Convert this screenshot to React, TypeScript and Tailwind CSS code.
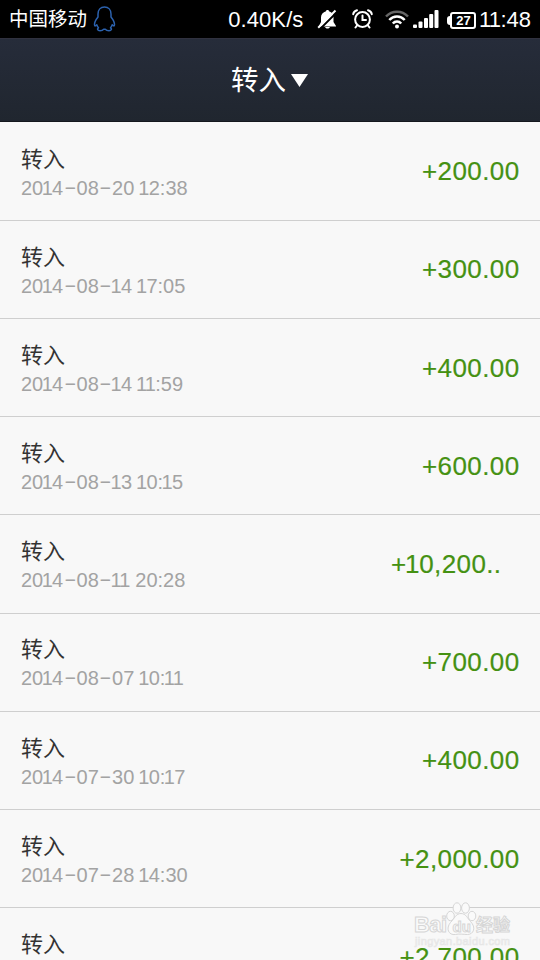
import React from 'react';

const records = [
  { date: '2014-08-20 12:38', amount: '+200.00' },
  { date: '2014-08-14 17:05', amount: '+300.00' },
  { date: '2014-08-14 11:59', amount: '+400.00' },
  { date: '2014-08-13 10:15', amount: '+600.00' },
  { date: '2014-08-11 20:28', amount: '+10,200..' },
  { date: '2014-08-07 10:11', amount: '+700.00' },
  { date: '2014-07-30 10:17', amount: '+400.00' },
  { date: '2014-07-28 14:30', amount: '+2,000.00' },
  { date: '2014-07-22 09:26', amount: '+2,700.00' },
];

// The digit 1 sits tighter than the others, hyphens are drawn wide
const Digits = ({ text }: { text: string }) => (
  <>
    {text.split(/([1-])/).map((part, index) => {
      if (part === '1') {
        return <span key={index} className="-ml-[1.6px] -mr-[0.7px]">1</span>;
      }
      if (part === '-') {
        return (
          <span key={index} className="inline-block w-[13.3px] text-center">
            <span className="inline-block -translate-y-px scale-x-[1.9]">-</span>
          </span>
        );
      }
      return part;
    })}
  </>
);

const PenguinIcon = () => (
  <svg className="ml-[5px] h-[28px] w-[25px]" viewBox="0 0 25 28" fill="none" stroke="#2c62ae" strokeWidth="1.5" strokeLinejoin="round">
    <path d="M12.5 2C8.500 2 6 4.800 6 9v3C4 14.500 2.500 17 2.500 19.500c0 1.800.6 2 2.300.2.3 1.300.9 2.300 1.700 3.100-1.700.9-1.200 2.900 1.500 2.900 1.900 0 3-.6 3.700-1.500h1.600c.7.900 1.800 1.500 3.700 1.500 2.700 0 3.200-2 1.500-2.900.8-.8 1.400-1.800 1.700-3.100 1.700 1.800 2.300 1.600 2.300-.2 0-2.500-1.500-5-3.500-7.500V9c0-4.200-2.500-7-6.500-7z" />
  </svg>
);

const MutedBellIcon = () => (
  <svg className="ml-[13px] h-[20px] w-[20px]" viewBox="0 0 20 20">
    <path fill="#fff" d="M10.500 1c1 0 1.300.5 1.500 1.200 3 .8 4.500 3.300 4.500 6V13l2.500 4v.5H2V17l2-4V8.200c0-2.700 2-5.200 5-6 .2-.7.5-1.200 1.500-1.200zM8 18h5c-.3.900-1.200 1.500-2.500 1.500S8.300 18.900 8 18z" />
    <path stroke="#000" strokeWidth="2" d="M2.500 20.500L20.500 2.500" />
    <path stroke="#fff" strokeWidth="2" d="M1.200 18.800L18.500 1.500" />
  </svg>
);

const AlarmIcon = () => (
  <svg className="ml-[15px] h-[20px] w-[21px]" viewBox="0 0 21 20" fill="none" stroke="#fff" strokeWidth="2" strokeLinecap="round">
    <circle cx="10.500" cy="10.500" r="7.400" />
    <path d="M10.500 6.500V11h3.500M1.200 5.200C1.500 3.200 3 1.700 5 1.200M19.800 5.200C19.500 3.200 18 1.700 16 1.200M5 16.500L3.500 18.500M16 16.500l1.500 2" />
  </svg>
);

const WifiIcon = () => (
  <svg className="ml-[12px] h-[19px] w-[24px]" viewBox="0 0 24 19" fill="none" strokeWidth="2.500">
    <path stroke="#666" d="M1 6.500C7 .2 17 .2 23 6.500" />
    <path stroke="#fff" d="M4.300 10C8.500 5.300 15.500 5.300 19.700 10M7.800 13.500c2.300-2.600 6.100-2.600 8.400 0" />
    <circle cx="12" cy="16.500" r="2" fill="#fff" />
  </svg>
);

const SignalIcon = () => (
  <svg className="ml-[4px] h-[18px] w-[26px]" viewBox="0 0 26 18" fill="#fff">
    <rect x="0" y="14.500" width="4" height="3.500" rx="1" />
    <rect x="5.500" y="11.500" width="4" height="6.500" rx="1" />
    <rect x="11" y="8" width="4" height="10" rx="1" />
    <rect x="16.200" y="4" width="4" height="14" rx="1" />
    <rect x="21.500" y="0" width="4" height="18" rx="1" />
  </svg>
);

const BatteryIcon = () => (
  <div className="mt-[2px] ml-[8px] flex items-center">
    <div className="h-[9px] w-[3px] rounded-l-sm bg-white" />
    <div className="flex h-[17px] w-[26px] items-center justify-center rounded-[3px] border-2 border-white pt-px text-[13px] leading-none font-bold">
      27
    </div>
  </div>
);

const StatusBar = () => (
  <div className="flex h-[38px] items-center bg-black pl-[9px] text-white">
    <span className="pt-px text-[19.5px]">中国移动</span>
    <PenguinIcon />
    <div className="ml-auto flex items-center pr-[9px]">
      <span className="mr-px text-[22px] tracking-[0.1px]">0.40K/s</span>
      <MutedBellIcon />
      <AlarmIcon />
      <WifiIcon />
      <SignalIcon />
      <BatteryIcon />
      <span className="ml-[4px] text-[22px] whitespace-nowrap"><Digits text="11:48" /></span>
    </div>
  </div>
);

const Watermark = () => (
  <div className="absolute top-[900px] left-[413px] h-[50px] w-[100px]">
    <svg className="h-[50px] w-[100px]" viewBox="0 0 100 50" fill="#fafafa" stroke="#d6d6d6" strokeWidth="1">
      <text x="1" y="32" fontSize="22" fontWeight="bold" textLength="33" fontFamily="Liberation Sans, sans-serif">Bai</text>
      <ellipse cx="37.500" cy="16" rx="3.800" ry="4.700" />
      <ellipse cx="44" cy="8" rx="3.900" ry="5.200" />
      <ellipse cx="52.500" cy="8" rx="3.900" ry="5.200" />
      <ellipse cx="59" cy="16" rx="3.800" ry="4.700" />
      <path d="M48 13.500c5 0 6.500 5 9.500 8 6 6 3 13-3 13-3 0-9-1-12 0-7 1-10-6-5-12 4-4 5.500-9 10.500-9z" />
      <text x="39.500" y="31.500" fontSize="15" fontWeight="bold" fontFamily="Liberation Sans, sans-serif">du</text>
      <text x="63" y="31" fontSize="17" fontWeight="bold" fontFamily="Noto Sans CJK SC, sans-serif">经验</text>
      <text x="2" y="45" fontSize="11" stroke="#e6e6e6" strokeWidth="0.700" textLength="95" fontFamily="Liberation Sans, sans-serif">jingyan.baidu.com</text>
    </svg>
  </div>
);

const App = () => {
  return (
    <div className="relative h-[960px] w-[540px] overflow-hidden bg-[#f8f8f8] font-['Liberation_Sans','Noto_Sans_CJK_SC',sans-serif]">
      <StatusBar />
      <header className="flex h-[84px] items-center justify-center border-t border-[#30313f] border-b border-b-[#15181e] bg-linear-to-b from-[#262c3a] to-[#20262f] pr-px text-white">
        <h1 className="pt-[2px] text-[27.5px]">转入</h1>
        <svg className="ml-[5px] h-[13px] w-[17px]" viewBox="0 0 17 13">
          <path fill="#fff" d="M0 0h17L8.500 13z" />
        </svg>
      </header>

      <ul className="pt-[0.7px]">
        {records.map((record) => (
          <li key={record.date} className="flex h-[98.2px] items-center justify-between border-b border-[#cfcfcf] pr-[20.5px] pl-[21px]">
            <div className="pt-[3.5px] whitespace-nowrap">
              <p className="text-[22px] leading-[30px] text-[#333]">转入</p>
              <p className="text-[20px] leading-[27px] text-[#a3a3a3]"><Digits text={record.date} /></p>
            </div>
            <span className={`pt-px text-[26px] tracking-[0.4px] whitespace-nowrap text-[#459112] [-webkit-text-stroke:0.2px_#459112] ${record.amount.endsWith('..') ? 'mr-[18px]' : ''}`}>
              <Digits text={record.amount} />
            </span>
          </li>
        ))}
      </ul>

      <Watermark />
    </div>
  );
};

export default App;
